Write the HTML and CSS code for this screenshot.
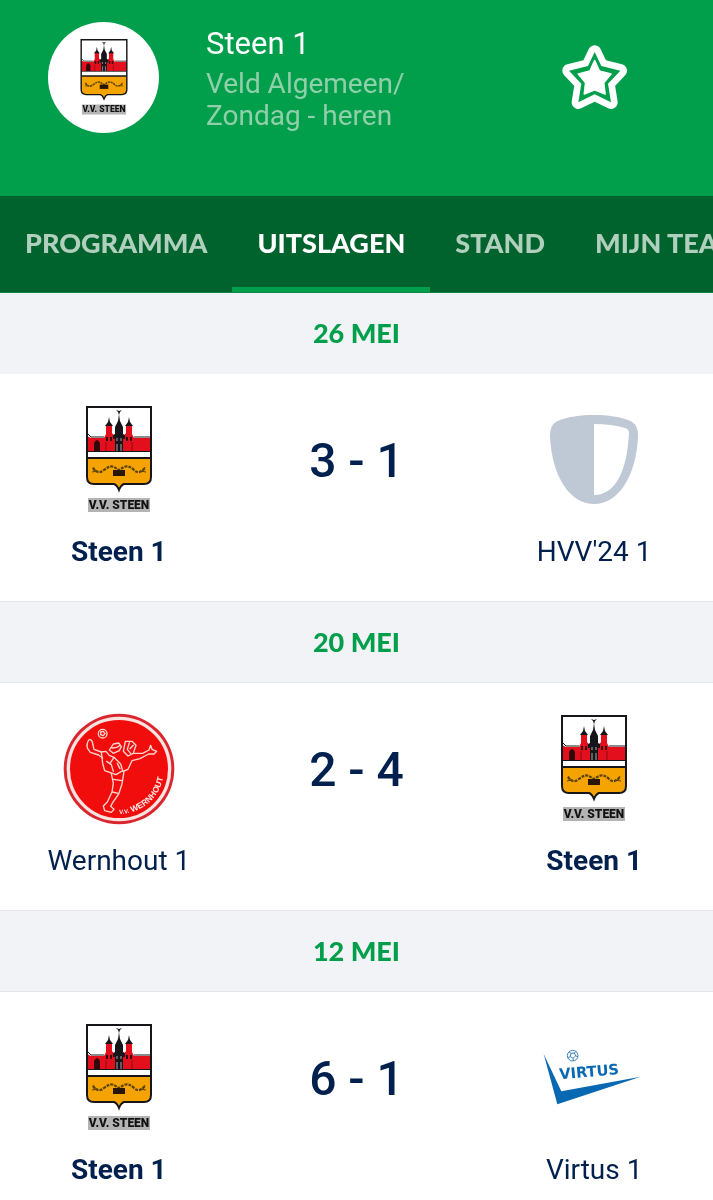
FILE: index.html
```
<!DOCTYPE html>
<html lang="nl">
<head>
    <meta charset="UTF-8">
    <meta name="viewport" content="width=device-width, initial-scale=1.0">
    <title>Steen 1 - Uitslagen</title>
    <link rel="stylesheet" href="styles.css">
</head>
<body>
    <!-- Club logos -->
    <svg class="defs" aria-hidden="true">
        <symbol id="logo-steen" viewBox="0 0 66 108">
            <path d="M1 1H65V71Q65 78 58 78H38Q35 79 33 84Q31 79 28 78H8Q1 78 1 71Z" fill="#fff"/>
            <path d="M1 52H65V71Q65 78 58 78H38Q35 79 33 84Q31 79 28 78H8Q1 78 1 71Z" fill="#f5a300"/>
            <path d="M1 30L5 32H18L20 28V19H26V27L29 31H37L40 27V19H46V28L48 32H65V45H1Z" fill="#e30f1c"/>
            <path d="M1 27L5 31H18M48 31H65M1 45.500H65" fill="none" stroke="#16161a"/>
            <path d="M1 52H65" stroke="#16161a" stroke-width="2"/>
            <path d="M19 20L22 16 23 11 24 16 27 20ZM39 20L42 16 43 11 44 16 47 20Z" fill="#16161a"/>
            <path d="M33 8L34 15 37 21V28L39 29V33H37V45H29V33H27V29L29 28V21L32 15Z" fill="#16161a"/>
            <path d="M30 4L33 5 36 4 34 6 33 9 32 6Z" fill="#16161a"/>
            <path d="M8 45V37Q11 31 14 37V45ZM20 31h2v4h-2zM24 31h2v4h-2zM40 31h2v4h-2zM44 31h2v4h-2z" fill="#33060b"/>
            <path d="M20 36V45M46 36V45" stroke="#8d0c14"/>
            <path d="M31 32v3M35 32v3M31 38v7M35 38v7" stroke="#a9a9ad" stroke-width="1"/>
            <path d="M7 62Q12 69 18 64T28 61L33 64 38 61Q43 59 48 64T59 62" fill="none" stroke="#5b430c" stroke-width="2.200" stroke-dasharray="3 1"/>
            <path d="M6 66L12 65M7 61L10 66M60 66L54 65M59 61L56 66" stroke="#5b430c"/>
            <path d="M27 64H39V70H27Z" fill="#2a1608"/>
            <path d="M1 1H65V71Q65 78 58 78H38Q35 79 33 84Q31 79 28 78H8Q1 78 1 71Z" fill="none" stroke="#16161a" stroke-width="2"/>
            <path d="M2 92H64V106H2Z" fill="#b4b4b4"/>
            <text class="steen-text" x="33" y="103" text-anchor="middle">V.V. STEEN</text>
        </symbol>

        <symbol id="logo-default" viewBox="0 0 88 90">
            <path d="M44 0C58 0 70 2 78 5C86 8 88 13 88 22C86 62 68 89 44 89C20 89 2 62 0 22C0 13 2 8 10 5C18 2 30 0 44 0Z" fill="#bfc8d5"/>
            <path d="M44 9Q62 9 75 13Q79 14 79 18C77 57 65 80 44 80Z" fill="#fff"/>
        </symbol>

        <symbol id="logo-wernhout" viewBox="39 39 336 336">
            <circle cx="207" cy="207" r="166" fill="#d9262f"/>
            <circle cx="207" cy="207" r="152" fill="#f20d0d" stroke="#fbe3e0" stroke-width="10"/>
            <g fill="none" stroke="#ffd6cf" stroke-width="4" stroke-linejoin="round" stroke-linecap="round">
                <circle cx="158" cy="101" r="13"/>
                <path d="M152 96L160 94 165 101 159 107 152 104Z"/>
                <path d="M154 156L132 148 127 126Q124 116 116 120Q108 134 113 146L121 157 146 165 158 174"/>
                <path d="M154 156L168 154 178 166 192 172 212 192 218 212 198 224 164 212 158 190Z"/>
                <path d="M178 150L190 132 206 129 214 140 208 152 190 160ZM186 144L200 142 210 136"/>
                <path d="M226 124L246 124 258 136 250 160 234 168 220 154ZM238 128L232 148 242 160M250 136L240 146"/>
                <path d="M250 160L278 160 297 150 302 136 306 148 320 154 312 162 296 162 270 176 246 182 234 208 218 214"/>
                <path d="M170 184L184 194 190 214M202 190L210 206M192 172L180 190"/>
                <path d="M184 220L190 250 186 276 172 306 160 318 164 332 184 337 192 328 182 319 188 308 206 282 216 252 222 214"/>
                <path d="M190 238L216 242M187 276L204 280"/>
            </g>
            <path id="wernhout-arc" d="M207 342A135 135 0 0 0 342 207" fill="none"/>
            <text class="wernhout-text"><textPath href="#wernhout-arc" startOffset="1"><tspan class="small">V.V.</tspan> WERNHOUT</textPath></text>
        </symbol>

        <symbol id="logo-virtus" viewBox="66 54 312 180">
            <path d="M71 72L124 184L362 140L112 223Z" fill="#0868b2"/>
            <g fill="none" stroke="#3d83bd" stroke-width="3">
                <circle cx="158" cy="77" r="16"/>
                <path d="M153 70L163 69 167 78 159 85 151 80ZM153 70L147 65M163 69L168 64M167 78L174 80M159 85L160 93M151 80L143 83"/>
            </g>
            <text class="virtus-text" x="119" y="148" transform="rotate(-5 119 148)">VIRTUS</text>
        </symbol>
    </svg>

    <header class="team-header">
        <div class="avatar">
            <svg class="avatar-logo" role="img" aria-label="V.V. Steen"><use href="#logo-steen"/></svg>
        </div>
        <div class="team-info">
            <h1>Steen 1</h1>
            <p>Veld Algemeen/<br>Zondag - heren</p>
        </div>
        <button type="button" class="favorite" aria-label="Favoriet">
            <svg viewBox="5 9 195 195">
                <path class="star-ring" d="M103 30L123 72 180 86 143 125 152 181 103 157 54 181 63 125 26 86 83 72Z"/>
                <path class="star-core" d="M103 56L117 87 152 96 130 122 134 156 103 143 72 156 76 122 54 96 89 87Z"/>
            </svg>
        </button>
    </header>

    <nav class="tabs">
        <a href="#programma">PROGRAMMA</a>
        <a href="#uitslagen" class="active">UITSLAGEN</a>
        <a href="#stand">STAND</a>
        <a href="#team">MIJN TEAM</a>
    </nav>

    <main class="results">
        <h2 class="date">26 MEI</h2>
        <div class="match">
            <div class="team">
                <div class="crest"><svg class="logo-steen"><use href="#logo-steen"/></svg></div>
                <span class="name own">Steen 1</span>
            </div>
            <div class="score">3 - 1</div>
            <div class="team">
                <div class="crest"><svg class="logo-default"><use href="#logo-default"/></svg></div>
                <span class="name">HVV'24 1</span>
            </div>
        </div>

        <h2 class="date">20 MEI</h2>
        <div class="match">
            <div class="team">
                <div class="crest"><svg class="logo-wernhout"><use href="#logo-wernhout"/></svg></div>
                <span class="name">Wernhout 1</span>
            </div>
            <div class="score">2 - 4</div>
            <div class="team">
                <div class="crest"><svg class="logo-steen"><use href="#logo-steen"/></svg></div>
                <span class="name own">Steen 1</span>
            </div>
        </div>

        <h2 class="date">12 MEI</h2>
        <div class="match">
            <div class="team">
                <div class="crest"><svg class="logo-steen"><use href="#logo-steen"/></svg></div>
                <span class="name own">Steen 1</span>
            </div>
            <div class="score">6 - 1</div>
            <div class="team">
                <div class="crest"><svg class="logo-virtus"><use href="#logo-virtus"/></svg></div>
                <span class="name">Virtus 1</span>
            </div>
        </div>
    </main>
</body>
</html>
```
FILE: styles.css
```
:root {
    --green: #019f4b;
    --dark-green: #00622d;
    --navy: #01204e;
    --grey: #f2f3f6;
    --line: #e2e5ea;
}

* {
    box-sizing: border-box;
    margin: 0;
    padding: 0;
}

body {
    font-family: Roboto, sans-serif;
    background-color: #fff;
    color: var(--navy);
}

svg {
    display: block;
}

.defs {
    position: absolute;
    width: 0;
    height: 0;
}

.team-header {
    display: flex;
    align-items: flex-start;
    min-height: 196px;
    padding: 22px 86px 22px 48px;
    background-color: var(--green);
    color: #fff;
}

.avatar {
    display: flex;
    align-items: center;
    justify-content: center;
    flex: none;
    width: 111px;
    height: 111px;
    border-radius: 50%;
    background-color: #fff;
}

.avatar-logo {
    width: 48px;
    height: 77px;
}

.team-info {
    flex: 1;
    padding: 4px 0 0 47px;
}

.team-info h1 {
    font-size: 31px;
    font-weight: 400;
    line-height: 36px;
    margin-bottom: 6px;
}

.team-info p {
    font-size: 28px;
    line-height: 32px;
    color: #8fcfa9;
}

.favorite {
    width: 65px;
    margin-top: 23px;
    border: none;
    background: none;
    cursor: pointer;
}

.star-ring {
    fill: var(--green);
    stroke: #fff;
    stroke-width: 40;
    stroke-linejoin: round;
    paint-order: stroke;
}

.star-core {
    fill: #fff;
    stroke: #fff;
    stroke-width: 5;
    stroke-linejoin: round;
}

.tabs {
    display: flex;
    overflow-x: auto;
    scrollbar-width: none;
    background-color: var(--dark-green);
    border-bottom: 1px solid #0f8546;
}

.tabs a {
    flex: none;
    padding: 3px 25px 0;
    border-bottom: 5px solid transparent;
    font-family: Lato, sans-serif;
    font-size: 27px;
    font-weight: 900;
    line-height: 88px;
    color: #b0d0bd;
    text-decoration: none;
}

.tabs a.active {
    color: #fff;
    border-bottom-color: var(--green);
}

.date {
    border: 1px solid var(--line);
    border-width: 1px 0;
    background-color: var(--grey);
    color: var(--green);
    font-family: Lato, sans-serif;
    font-size: 27px;
    font-weight: 900;
    line-height: 80px;
    text-align: center;
}

.date:first-child {
    border-top: none;
    border-bottom-color: var(--grey);
}

.match {
    display: grid;
    grid-template-columns: repeat(3, 1fr);
    padding: 30px 0 33px;
}

.team {
    display: flex;
    flex-direction: column;
    align-items: center;
    gap: 20px;
}

.crest {
    display: flex;
    align-items: center;
    justify-content: center;
    height: 112px;
}

.logo-steen {
    width: 66px;
    height: 108px;
}

.logo-default {
    width: 88px;
    height: 90px;
}

.logo-wernhout {
    width: 112px;
    height: 112px;
}

.logo-virtus {
    width: 104px;
    height: 60px;
}

.name {
    font-size: 28px;
    line-height: 32px;
}

.name.own {
    font-weight: 700;
}

.score {
    font-size: 48px;
    font-weight: 500;
    line-height: 114px;
    text-align: center;
}

.steen-text {
    font-family: Roboto, sans-serif;
    font-size: 12px;
    font-weight: 900;
    fill: #111;
}

.wernhout-text {
    font-family: "Liberation Sans", sans-serif;
    font-size: 25px;
    font-weight: 700;
    fill: #ffe9e4;
}

.wernhout-text .small {
    font-size: 18px;
}

.virtus-text {
    font-family: "DejaVu Sans", sans-serif;
    font-size: 44px;
    font-weight: 700;
    fill: #0868b2;
}
```
